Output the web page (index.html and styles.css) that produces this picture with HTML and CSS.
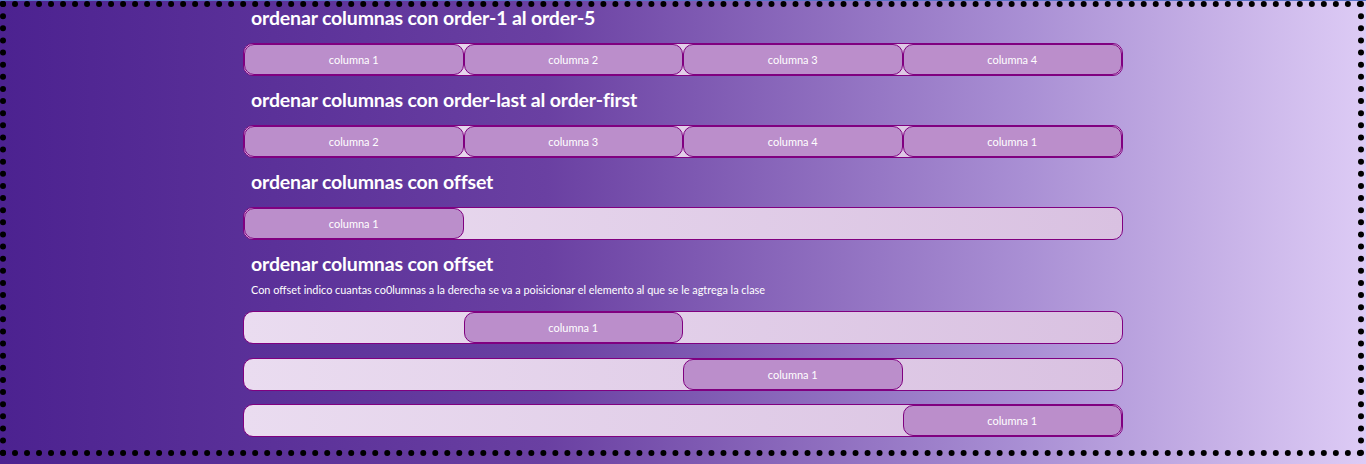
FILE: index.html
```html
<!DOCTYPE html>
<html lang="es">
<head>
<meta charset="utf-8">
<title>Ordenar columnas</title>
<link rel="stylesheet" href="styles.css">
</head>
<body>
<div class="frame">
  <div class="container">
    <section class="section">
      <h2 class="title">ordenar columnas con order-1 al order-5</h2>
      <div class="row">
        <div class="col">columna 1</div>
        <div class="col">columna 2</div>
        <div class="col">columna 3</div>
        <div class="col">columna 4</div>
      </div>
    </section>
    <section class="section">
      <h2 class="title">ordenar columnas con order-last al order-first</h2>
      <div class="row">
        <div class="col">columna 2</div>
        <div class="col">columna 3</div>
        <div class="col">columna 4</div>
        <div class="col">columna 1</div>
      </div>
    </section>
    <section class="section">
      <h2 class="title">ordenar columnas con offset</h2>
      <div class="row">
        <div class="col">columna 1</div>
      </div>
    </section>
    <section class="section">
      <h2 class="title">ordenar columnas con offset</h2>
      <p class="desc">Con offset indico cuantas co0lumnas a la derecha se va a poisicionar el elemento al que se le agtrega la clase</p>
      <div class="row">
        <div class="col offset-1">columna 1</div>
      </div>
      <div class="row">
        <div class="col offset-2">columna 1</div>
      </div>
      <div class="row">
        <div class="col offset-3">columna 1</div>
      </div>
    </section>
  </div>
</div>
</body>
</html>
```

FILE: styles.css
```css
html {
  background: linear-gradient(to right, #4c2290 0%, #6a40a2 40%, #a98fd4 75%, #ddcbf5 100%);
  min-height: 100%;
}
body {
  margin: 0;
  border-top: 1px solid #5a72c8;
  font-family: "Lato", "Open Sans", sans-serif;
  color: #fff;
}
.frame {
  box-sizing: border-box;
  height: 455px;
  margin: 0 2px 8px 0;
  border: 6px dotted #000;
}
.container {
  width: 880px;
  margin: 0 0 0 calc(50% - 439px);
}
.title {
  margin: 0;
  padding: 1px 0 0 8px;
  font-size: 19.5px;
  line-height: 20px;
  font-weight: 700;
  letter-spacing: -0.15px;
}
.row {
  display: flex;
  box-sizing: border-box;
  height: 33px;
  margin: 15px 0 13px;
  border: 1px solid #800080;
  border-radius: 10px;
  background: linear-gradient(to right, #eadcf0, #d9c1e1);
}
.col {
  box-sizing: border-box;
  width: 25%;
  border: 1px solid #800080;
  border-radius: 10px;
  background: #bb8ecb;
  display: flex;
  align-items: center;
  justify-content: center;
  font-size: 11px;
}
.desc {
  margin: 8px 0 0;
  padding-left: 8px;
  font-size: 10.9px;
  line-height: 16px;
}
.desc + .row {
  margin-top: 13px;
  margin-bottom: 14px;
}
.row + .row {
  margin-top: 0;
  margin-bottom: 13px;
}
.offset-1 { margin-left: 25%; }
.offset-2 { margin-left: 50%; }
.offset-3 { margin-left: 75%; }
```
